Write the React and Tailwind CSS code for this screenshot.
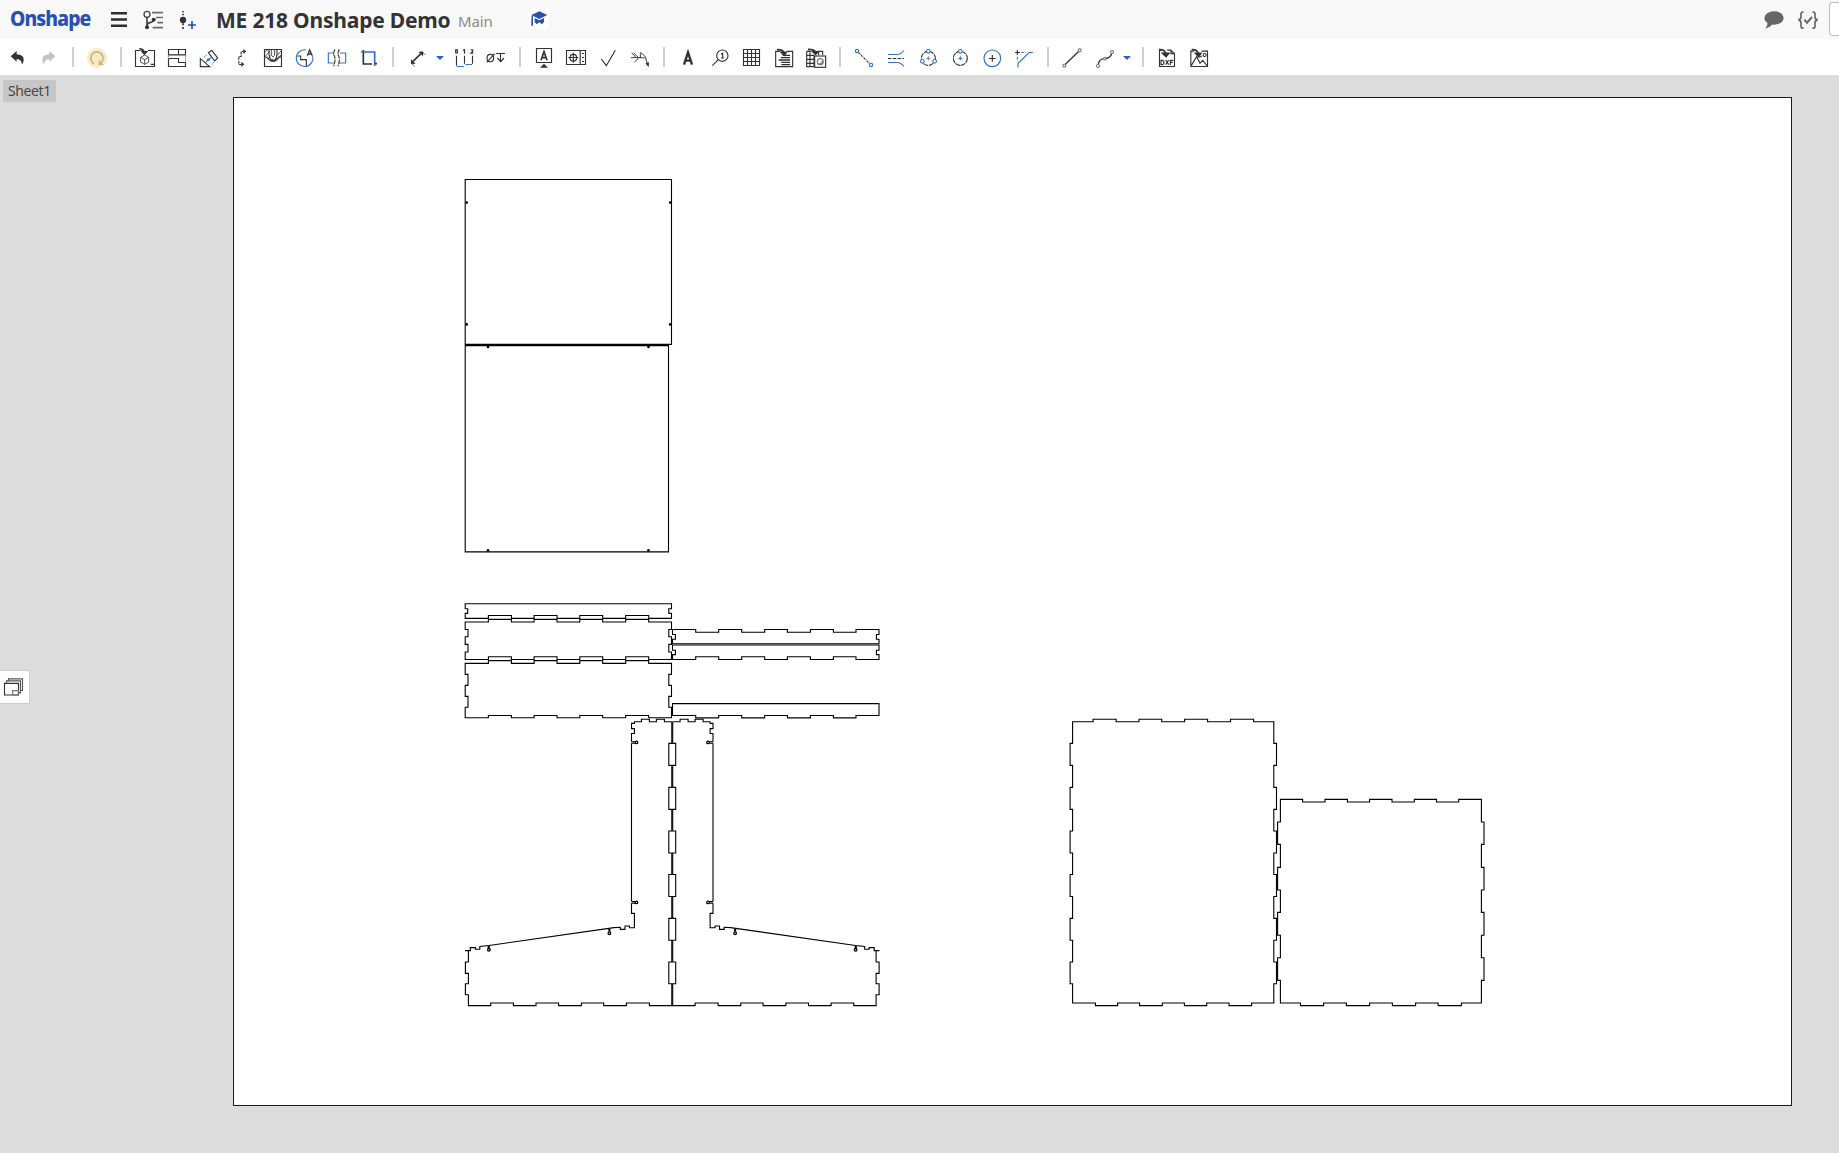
import React from "react";

const INK = "#333";
const BLUE = "#3275c8";

/* Icons are drawn on a grid of three units per pixel. */
function Icon({ x, w = 32, y = 117, h = 36, children }) {
  return (
    <svg
      className="block shrink-0"
      width={w}
      height={h}
      viewBox={`${x} ${y} ${w * 3} ${h * 3}`}
      fill="none"
      stroke={INK}
      strokeWidth="3.4"
    >
      {children}
    </svg>
  );
}

function Sep() {
  return (
    <div className="flex w-4 shrink-0 justify-center">
      <div className="h-5 w-0.5 bg-[#cfcfcf]" />
    </div>
  );
}

function Caret({ x }) {
  return (
    <Icon x={x} w={15}>
      <path d={`M${x + 9} 168h24l-12 12z`} fill="#2f62b5" stroke="none" />
    </Icon>
  );
}

/* Toggles between two levels at every cut, then runs on to the end. */
const hEdge = (base, alt, cuts, end) =>
  cuts.map((c, i) => `H${c}V${i % 2 ? base : alt}`).join("") + `H${end}`;
const vEdge = (base, alt, cuts, end) =>
  cuts.map((c, i) => `V${c}H${i % 2 ? base : alt}`).join("") + `V${end}`;
const rev = (a) => [...a].reverse();

const CL = [488.4, 511.4, 534.1, 557, 579.8, 602.7, 625.7, 648.7];
const CR = [695.7, 718.7, 741.7, 764.7, 787.4, 810.4, 833.4, 856];
const TALL = [743.4, 765.4, 787.4, 809.4, 831, 853, 874.5, 896.5, 918.4, 940.2, 962, 983.7];
const PB = [822, 844.4, 867.4, 890, 912.4, 935.3, 957.7, 980.4];

const PLATES = [
  "M465.2 179.5H671.5V344.4H465.2Z",
  "M465.2 345.6H668.5V551.9H465.2Z",
  `M465.2 603.8H671.5${vEdge(671.5, 668.8, [608.7, 613.4], 618.4)}${hEdge(618.4, 615.5, rev(CL), 465.2)}${vEdge(465.2, 467.7, [613.4, 608.7], 603.8)}Z`,
  `M465.2 622${hEdge(622, 619.4, CL, 671.5)}${vEdge(671.5, 668.8, [629.5, 636.7, 644.4, 652], 659.5)}${hEdge(659.5, 656.8, rev(CL), 465.2)}${vEdge(465.2, 468, [652, 644.4, 636.7, 629.5], 622)}Z`,
  `M465.2 663.4${hEdge(663.4, 660.6, CL, 671.5)}${vEdge(671.5, 668.8, [674.4, 685.4, 696.4, 707.3], 717.8)}${hEdge(717.8, 715.5, rev(CL), 465.2)}${vEdge(465.2, 468, [707.3, 696.4, 685.4, 674.4], 663.4)}Z`,
  `M672.5 629.5${hEdge(629.5, 632.2, CR, 879)}${vEdge(879, 876.4, [634.5, 639.2], 643.7)}H672.5${vEdge(672.5, 675.4, [639.2, 634.5], 629.5)}Z`,
  `M672.5 645H879${vEdge(879, 876.4, [650.2, 654.6], 659.5)}${hEdge(659.5, 656.8, rev(CR), 672.5)}${vEdge(672.5, 675.4, [654.6, 650.2], 645)}Z`,
  `M672.5 703.6H879V715.5${hEdge(715.5, 717.9, rev(CR), 672.5)}Z`,
  `M1072.6 721.8${hEdge(721.8, 719.3, [1093.1, 1116.1, 1139, 1161.7, 1184.6, 1207.6, 1230.5, 1253.6], 1273.8)}${vEdge(1273.8, 1276.5, TALL, 1003)}${hEdge(1003, 1005.6, [1251.6, 1229, 1206.7, 1184.4, 1162.3, 1139.6, 1117.6, 1095.4], 1072.6)}${vEdge(1072.6, 1070.1, rev(TALL), 721.8)}Z`,
  `M1280.4 799.4${hEdge(799.4, 802, [1302.6, 1325, 1347.4, 1369.6, 1392, 1414.3, 1436.5, 1458.7], 1481.4)}${vEdge(1481.4, 1484, PB, 1003)}${hEdge(1003, 1005.6, [1461.4, 1438.1, 1415.6, 1392.4, 1369.6, 1346.4, 1323.6, 1300.5], 1280.4)}${vEdge(1280.4, 1277.6, rev(PB), 799.4)}Z`,
];

const BRACKET =
  "M671.8 721.7H664.4V719.2H656.4V721.7H649.4V719.2H641.4V721.7H634.4V723.4H631.5V728.6H634.4V733.5H631.5V741.7M631.5 743.2V901.6M631.5 903.2V913.4H634.4V927.8H629.4V926H625V929.4H620.3V927.3L614 927.6L489 945.5L479.8 946.4V949.3H475.4V947.6H470.3V950.6H465M468.4 950.6" +
  vEdge(468.4, 465.4, [962, 973.4, 983.7, 994.7], 1005.6) +
  hEdge(1005.6, 1003, [490.7, 513.4, 536, 558.6, 581.4, 603.7, 626.4, 649.4], 671.8) +
  vEdge(671.8, 668.8, rev(TALL), 721.7) +
  "M631.5 741.7H635M631.5 743.2H635M631.5 901.6H635M631.5 903.2H635M488.2 945.6V948.5M489.2 945.5V948.5M608.9 928.5V931.5M609.9 928.4V931.5";

function Bracket() {
  return (
    <>
      <path d={BRACKET} />
      <g strokeWidth="1.3">
        <circle cx="636.5" cy="742.4" r="1.3" />
        <circle cx="636.5" cy="902.4" r="1.3" />
        <circle cx="488.9" cy="949.8" r="1.3" />
        <circle cx="609.4" cy="933.2" r="1.3" />
      </g>
    </>
  );
}

function Drawing() {
  return (
    <svg className="block h-full w-full" viewBox="234 98 1557 1006" preserveAspectRatio="xMinYMin" fill="none" stroke="#000" strokeWidth="1.1">
      {PLATES.map((d) => (
        <path key={d} d={d} />
      ))}
      <Bracket />
      <g transform="translate(1344.5 0) scale(-1 1)">
        <Bracket />
      </g>
      <g fill="#000" stroke="none">
        {[[466.7, 202.6], [670.2, 202.6], [466.7, 324.4], [670.2, 324.4], [488, 346.9], [648.5, 346.9], [488, 550.4], [648.5, 550.4]].map(([x, y]) => (
          <circle key={`${x}-${y}`} cx={x} cy={y} r="1.3" />
        ))}
      </g>
    </svg>
  );
}

function Header() {
  return (
    <header className="flex h-[39px] shrink-0 items-center overflow-hidden bg-[#f8f8f8]">
      <div className="w-[100px] pl-[10px] font-['Noto_Sans',sans-serif] text-[22px] leading-[34px] font-extrabold tracking-[-1px] text-[#2a4fb0]">
        <span className="block h-[39px] origin-left scale-x-[0.88]">Onshape</span>
      </div>
      <Icon x={300} w={38} y={0} h={39}>
        <path d="M333 40h48M333 58.500h48M333 77h48" stroke="#2e2e2e" strokeWidth="7.500" />
      </Icon>
      <Icon x={414} w={34} y={0} h={39}>
        <g stroke="#444" strokeWidth="4">
          <circle cx="441" cy="43" r="9" />
          <path d="M441 52v30M441 76q2-8 11-9q8-2 8-6" strokeWidth="5" />
          <path d="M456 38h33M468 52.500h21M472 68h17M458 83h31" strokeWidth="5" stroke="#6a6a6a" />
        </g>
        <circle cx="441" cy="82" r="6" fill="#333" stroke="none" />
        <circle cx="461" cy="59" r="6" fill="#333" stroke="none" />
      </Icon>
      <Icon x={516} w={33} y={0} h={39}>
        <path d="M549 33v4M549 41v5M549 70v6M549 81v6" stroke="#333" strokeWidth="5" />
        <circle cx="549" cy="60" r="9.500" fill="#333" stroke="none" />
        <path d="M564 75h24M576 63v24" stroke="#2a4fb0" strokeWidth="5" />
      </Icon>
      <h1 className="ml-[11px] w-[234px] font-['Noto_Sans',sans-serif] text-[21px] leading-[40px] font-bold tracking-[-0.2px] whitespace-nowrap text-[#333]">
        ME 218 Onshape Demo
      </h1>
      <span className="ml-[4px] w-[66px] pt-1 pl-1 font-['Noto_Sans',sans-serif] text-[15px] tracking-[-0.1px] text-[#8a8a8a]">Main</span>
      <div className="ml-[5px]">
        <Icon x={435} w={28} y={0} h={39}>
          <rect x="447" y="27" width="60" height="60" rx="6" fill="#fff" stroke="none" />
          <g fill="#2a4fb0" stroke="none">
            <path d="M478 34L502 45L478 57L454 45ZM464 54L478 61L492 54V66L486 73L478 67L470 73L464 66ZM455 47h4v30h-5V62z" />
          </g>
        </Icon>
      </div>
      <div className="flex-1" />
      <Icon x={480} w={28} y={0} h={39}>
        <ellipse cx="522" cy="54" rx="29" ry="20" fill="#666" stroke="none" />
        <path d="M502 66Q504 77 495 86Q511 82 518 72Z" fill="#666" stroke="none" />
      </Icon>
      <Icon x={564} w={41} y={0} h={39}>
        <g stroke="#666" strokeWidth="5">
          <path d="M611 36h-3q-5 0-5 5v10q0 7-8 8.500q8 1.500 8 8v12q0 5 5 5h3M637 36h3q5 0 5 5v10q0 7 8 8.500q-8 1.500-8 8v12q0 5-5 5h-3" />
          <path d="M613 59l8 9l15-17" strokeWidth="6" />
        </g>
      </Icon>
      <div className="-mt-[1px] h-[34px] w-[10px] shrink-0 rounded-l-[4px] border border-r-0 border-[#bdbdbd] bg-white" />
    </header>
  );
}

function Toolbar() {
  return (
    <div className="flex h-9 shrink-0 items-center bg-white pl-px">
      <Icon x={3}>
        <path d="M32 169L50 153V163Q71 164 71 179Q71 187 66 194Q65 178 50 177V185Z" fill={INK} stroke="none" />
      </Icon>
      <Icon x={99}>
        <path d="M166 169L148 153V163Q127 164 127 179Q127 187 132 194Q133 178 148 177V185Z" fill="#c4c4c4" stroke="none" />
      </Icon>
      <Sep />
      <Icon x={243}>
        <circle cx="291" cy="174" r="30" fill="#fdeabb" stroke="none" />
        <path d="M283 191A18.500 18.500 0 1 1 302 189" stroke="#b9b5a9" strokeWidth="5" />
        <path d="M296 180v15h15z" fill="#b9b5a9" stroke="none" />
      </Icon>
      <Sep />
      <Icon x={387}>
        <path d="M422 151.500H406.500V199.500H463.500V151.500H444M452 193h12" />
        <path d="M434 165l12 7v14l-12 7l-12-7v-14zM422 172l12 7l12-7M434 179v14" strokeWidth="2.500" />
        <path d="M418 146Q432 146 433 158M426 155l7 8l8-8z" fill={INK} />
      </Icon>
      <Icon x={483}>
        <path d="M505.500 148.500h51v16h-51zM535.500 148.500v16M505.500 175.500h30v12h21v12h-51z" />
        <path d="M505.500 167v9M556.500 167v20" stroke={BLUE} strokeDasharray="3 3" />
      </Icon>
      <Icon x={579}>
        <path d="M601 176v24h28L601 176ZM625 158l10-7l18 23l-9 9z" />
        <path d="M613 171l8-8M635 193l8-8" stroke={BLUE} strokeDasharray="3 3" />
        <path d="M618 186l16-14" stroke={BLUE} />
        <circle cx="625" cy="179" r="4" fill={BLUE} stroke="none" />
      </Icon>
      <Icon x={675}>
        <path d="M735 154.500h-11.500v15h-7v24h10" strokeDasharray="9 2.500" />
        <path d="M730 147l9 7.500l-9 7.500zM724 185l9 8l-9 8z" fill={INK} stroke="none" />
      </Icon>
      <Icon x={771}>
        <path d="M793.500 148.500h51v51h-51zM807 149v12q1 20 12 20t12-20v-12M793 170q8 0 12 7t14 7t14-7t12-7" />
        <path d="M795 157l8-8M796 168l12-13M805 177l6-10M812 183l6-7M824 183l6-9M831 177l8-10M832 166l13-15M839 170l6-7M814 149v17q5 9 10 0v-17" strokeWidth="2.500" />
      </Icon>
      <Icon x={867}>
        <path d="M919 150A25 25 0 1 0 938 168" stroke={BLUE} />
        <path d="M891 168h11v11h17v20" />
        <path d="M922 167l7-17l8 17M925 162h9" strokeWidth="4" />
      </Icon>
      <Icon x={963}>
        <path d="M1001 159h-16v30h16M1019 159h18v30h-20" stroke={BLUE} />
        <path d="M1005 148q-7 11-2 20t-2 31M1018 148q-7 11-2 20t-2 31" strokeDasharray="14 2" />
      </Icon>
      <Icon x={1059}>
        <path d="M1090 150v42h26" strokeWidth="5" />
        <path d="M1083 156h41v41" stroke="#2f6fc4" strokeWidth="5" />
        <path d="M1124 191h7" strokeWidth="5" />
      </Icon>
      <Sep />
      <Icon x={63}>
        <path d="M98 185l25-24" strokeWidth="5" />
        <path d="M93 192v-14l14 13zM130 155h-15l14 14z" fill={INK} stroke="none" />
        <path d="M92 188l12 12M124 153l12 12" strokeWidth="2" />
      </Icon>
      <Caret x={159} />
      <Icon x={204}>
        <path d="M229.500 167v30M253.500 167v24M277.500 167v24" />
        <path d="M230 199.500h22M256 193.500h20" stroke={BLUE} />
        <g strokeWidth="3.500">
          <rect x="227" y="149.500" width="5" height="9" />
          <path d="M249 151l4.500-2v12M272 149.500h6v5l-5 5h7" />
        </g>
      </Icon>
      <Icon x={300}>
        <ellipse cx="331" cy="174" rx="10" ry="11" />
        <path d="M320 187l24-26M348 160.500h27M361.500 161v24M352 174l10 11l10-11" />
      </Icon>
      <Sep />
      <Icon x={444}>
        <path d="M469.500 145.500h45v42h-45z" />
        <path d="M483 181l9-26l9 26M486 173h12" strokeWidth="5" />
        <path d="M480 203l12-12l12 12z" fill={INK} stroke="none" />
      </Icon>
      <Icon x={540}>
        <path d="M559.500 151.500h57v42h-57zM600.500 151v43" />
        <circle cx="580" cy="173" r="10" />
        <path d="M565 172.500h30M580 158v30M606 160.500h6M606 172.500h6M606 184.500h6" />
      </Icon>
      <Icon x={636}>
        <path d="M664 177l15 20l27-46" />
      </Icon>
      <Icon x={732}>
        <path d="M753 173h28l16 1l7 24M755 158l13 15M761 159l15 14l-13 14M781 157v17M783 158l16 15" strokeWidth="2.800" />
        <path d="M796 190l10 11l1-14z" fill={INK} stroke="none" />
      </Icon>
      <Sep />
      <Icon x={876}>
        <path d="M912 194l12-37l12 37M915 182h18" strokeWidth="7" />
      </Icon>
      <Icon x={972}>
        <circle cx="1027" cy="167" r="17" />
        <path d="M1015 179l-18 18M1023 163l5-3v14M1023 174h9" />
      </Icon>
      <Icon x={1068}>
        <path d="M1090.500 148.500h48v48h-48zM1102.500 149v48M1114.500 149v48M1126.500 149v48M1091 160.500h48M1091 172.500h48M1091 184.500h48" />
      </Icon>
      <Icon x={1164}>
        <path d="M1199 154H1187V200H1238V154H1220" />
        <path d="M1208 166h22M1202 173h28M1196 180h34M1204 187h26M1204 194h26" strokeWidth="4" />
        <path d="M1191 149q20 0 20 10" strokeWidth="5" />
        <path d="M1202 156h18l-7 11z" fill={INK} />
      </Icon>
      <Icon x={-30}>
        <path d="M-10 154V200H12M0 154v46M-10 154H2M-10 166H12M-10 178H12M-10 190H12M24 154H38V165M26 154v12M12 166v34" />
        <rect x="14" y="168" width="33" height="34" />
        <circle cx="31" cy="185" r="9" stroke="#777" />
        <path d="M24 192q10 3 14-9" stroke="#777" strokeWidth="4" />
        <path d="M-6 148q20 0 22 8" strokeWidth="5" />
        <path d="M7 155h18l-8 9z" fill={INK} />
      </Icon>
      <Sep />
      <Icon x={114}>
        <path d="M145 157l34 34" strokeDasharray="6 2 2 2" />
        <circle cx="141" cy="153" r="5" stroke={BLUE} />
        <circle cx="183" cy="195" r="5" stroke={BLUE} />
      </Icon>
      <Icon x={210}>
        <path d="M234 163.500h28q10 0 20-12M234 187.500h28q10 0 20 12" stroke={BLUE} />
        <path d="M234 175.500h48" strokeDasharray="9 2 2 2" />
      </Icon>
      <Icon x={306}>
        <circle cx="355" cy="175" r="21" strokeDasharray="14 3" />
        <g stroke={BLUE} fill="#fff">
          <circle cx="355" cy="154" r="5.500" />
          <circle cx="337" cy="184" r="5.500" />
          <circle cx="374" cy="184" r="5.500" />
        </g>
        <path d="M349 175.500h12M355 169v12" stroke="#888" />
      </Icon>
      <Icon x={402}>
        <circle cx="451" cy="175" r="21" strokeDasharray="15 2" />
        <circle cx="451" cy="154" r="5.500" stroke={BLUE} fill="#fff" />
        <path d="M445 175.500h12M451 169v12" stroke={BLUE} />
      </Icon>
      <Icon x={498}>
        <circle cx="547" cy="175" r="25" stroke={BLUE} />
        <path d="M537 175.500h20M547 165v20" />
      </Icon>
      <Icon x={594}>
        <path d="M615 157.500h15M622 150v15" />
        <path d="M634 157.500h14M622 170v14" stroke="#777" strokeDasharray="9 3" />
        <path d="M669 157.500h-12l-33 33v12" stroke={BLUE} />
      </Icon>
      <Sep />
      <Icon x={738}>
        <path d="M767 192l38-37" strokeWidth="4" />
        <g fill="#fff" stroke="#777">
          <circle cx="763" cy="197" r="4.500" />
          <circle cx="809" cy="151" r="4.500" />
        </g>
      </Icon>
      <Icon x={834}>
        <path d="M865 194q2-18 19-18t22-17" strokeWidth="4" />
        <g fill="#fff" stroke="#777">
          <circle cx="864" cy="198" r="4.500" />
          <circle cx="885" cy="176" r="4" />
          <circle cx="906" cy="156" r="4.500" />
        </g>
      </Icon>
      <Caret x={930} />
      <Sep />
      <Icon x={1023}>
        <path d="M1054 151h-5.500v48.500h45v-38l-11-11h-11M1083 150v11h11" />
        <path d="M1053 181v13h5q4-2 4-6.500t-4-6.500zM1067 180l9 14M1076 180l-9 14M1081 195v-14h9M1081 187h7" strokeWidth="3.500" />
        <path d="M1047 149q16-1 20 10" strokeWidth="5" />
        <path d="M1056 159h22l-10 12z" fill={INK} />
      </Icon>
      <Icon x={1119}>
        <path d="M1152 153.500h-9.500v46h50v-46h-18M1144 196l16-26l10 20l8-9l13 16M1168 172l8-4" />
        <circle cx="1184" cy="165" r="4.500" />
        <path d="M1145 149q16-1 19 10" strokeWidth="5" />
        <path d="M1155 159h19l-8 12z" fill={INK} />
      </Icon>
    </div>
  );
}

export default function App() {
  return (
    <div className="flex h-[1153px] w-[1839px] flex-col overflow-hidden bg-[#dcdcdc]">
      <Header />
      <Toolbar />
      <main className="flex flex-1">
        <aside className="flex w-[233px] shrink-0 flex-col items-start pt-[5px]">
          <div className="ml-[3px] h-[22px] w-[53px] bg-[#c6c6c6] pl-[5px] font-['Noto_Sans',sans-serif] text-[14px] leading-[22px] tracking-[-0.4px] text-[#484848]">
            Sheet1
          </div>
          <div className="mt-[568px] h-[34px] w-[30px] border border-l-0 border-[#ccc] bg-white">
            <Icon x={0} w={29} y={2013} h={32}>
              <path d="M25.500 2042v-5.500h42v35h-6M19.500 2048v-5.500h42v36h-6" stroke="#555" />
              <path d="M13.500 2050h42v35h-42z" fill="#fff" stroke="#333" />
              <path d="M38 2085v-13h17v13z" stroke="#777" />
            </Icon>
          </div>
        </aside>
        <section className="mt-[22px] h-[1009px] w-[1559px] shrink-0 border border-[#1c1c1c] bg-white">
          <Drawing />
        </section>
      </main>
    </div>
  );
}
